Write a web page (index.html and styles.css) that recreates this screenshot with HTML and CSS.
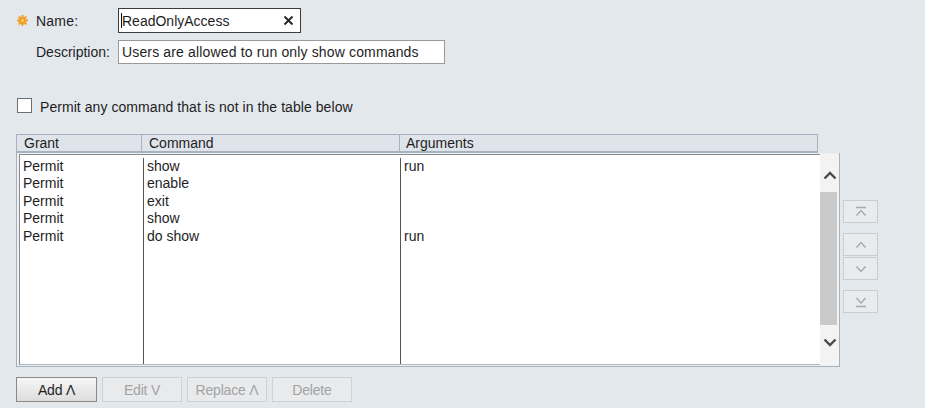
FILE: index.html
```html
<!DOCTYPE html>
<html>
<head>
<meta charset="utf-8">
<link rel="stylesheet" href="styles.css">
</head>
<body>
<div class="page">
  <div class="field-row name-row">
    <span class="req">
      <svg width="11" height="11" viewBox="0 0 11 11"><g fill="#f0a02c"><circle cx="5.5" cy="5.5" r="3.8"/><rect x="4.5" y="0" width="2" height="11" rx="0.6"/><rect x="0" y="4.5" width="11" height="2" rx="0.6"/><rect x="4.5" y="0" width="2" height="11" rx="0.6" transform="rotate(45 5.5 5.5)"/><rect x="4.5" y="0" width="2" height="11" rx="0.6" transform="rotate(-45 5.5 5.5)"/></g><circle cx="5.5" cy="5.5" r="1.3" fill="#fbd48a"/></svg>
    </span>
    <span class="label">Name:</span>
    <div class="input name-input">
      <span class="caret"></span><span class="value">ReadOnlyAccess</span>
      <svg class="clear" width="11" height="11" viewBox="0 0 11 11"><path d="M1.5 1.5L9.5 9.5M9.5 1.5L1.5 9.5" stroke="#222" stroke-width="1.8" fill="none"/></svg>
    </div>
  </div>
  <div class="field-row desc-row">
    <span class="label">Description:</span>
    <div class="input desc-input">Users are allowed to run only show commands</div>
  </div>
  <div class="check-row">
    <span class="checkbox"></span>
    <span class="check-text">Permit any command that is not in the table below</span>
  </div>
  <div class="table-area">
    <div class="table">
      <div class="thead">
        <div class="th th-grant">Grant</div>
        <div class="th th-cmd">Command</div>
        <div class="th th-args">Arguments</div>
      </div>
      <div class="tbody-wrap">
        <div class="tbody">
          <div class="col col-grant">
            <div class="cell">Permit</div>
            <div class="cell">Permit</div>
            <div class="cell">Permit</div>
            <div class="cell">Permit</div>
            <div class="cell">Permit</div>
          </div>
          <div class="col col-cmd">
            <div class="cell">show</div>
            <div class="cell">enable</div>
            <div class="cell">exit</div>
            <div class="cell">show</div>
            <div class="cell">do show</div>
          </div>
          <div class="col col-args">
            <div class="cell">run</div>
            <div class="cell"></div>
            <div class="cell"></div>
            <div class="cell"></div>
            <div class="cell">run</div>
          </div>
        </div>
        <div class="scrollbar">
          <div class="sb-arrow sb-up"><svg width="14" height="9" viewBox="0 0 14 9"><path d="M1.5 7.5L7 2L12.5 7.5" stroke="#4a4a4a" stroke-width="2.4" fill="none"/></svg></div>
          <div class="sb-thumb"></div>
          <div class="sb-arrow sb-down"><svg width="14" height="9" viewBox="0 0 14 9"><path d="M1.5 1.5L7 7L12.5 1.5" stroke="#4a4a4a" stroke-width="2.4" fill="none"/></svg></div>
        </div>
      </div>
    </div>
    <div class="side-buttons">
      <div class="side-btn btn-top"><svg width="14" height="12" viewBox="0 0 14 12"><path d="M2 1.5H12M2.5 9.5L7 4.5L11.5 9.5" stroke="#a9a9a9" stroke-width="1.4" fill="none"/></svg></div>
      <div class="side-pair">
        <div class="side-btn"><svg width="14" height="10" viewBox="0 0 14 10"><path d="M2.5 7.5L7 2.5L11.5 7.5" stroke="#a9a9a9" stroke-width="1.4" fill="none"/></svg></div>
        <div class="side-btn"><svg width="14" height="10" viewBox="0 0 14 10"><path d="M2.5 2.5L7 7.5L11.5 2.5" stroke="#a9a9a9" stroke-width="1.4" fill="none"/></svg></div>
      </div>
      <div class="side-btn btn-bottom"><svg width="14" height="12" viewBox="0 0 14 12"><path d="M2.5 2L7 7L11.5 2M2 10.5H12" stroke="#a9a9a9" stroke-width="1.4" fill="none"/></svg></div>
    </div>
  </div>
  <div class="buttons">
    <div class="btn btn-primary">Add Λ</div>
    <div class="btn btn-disabled">Edit V</div>
    <div class="btn btn-disabled">Replace Λ</div>
    <div class="btn btn-disabled">Delete</div>
  </div>
</div>
</body>
</html>
```

FILE: styles.css
```css
html, body {
  margin: 0;
  padding: 0;
}
body {
  background: #e3e8ed;
  font-family: "Liberation Sans", Arial, sans-serif;
  font-size: 14px;
  color: #1e1e1e;
  width: 925px;
  height: 408px;
  overflow: hidden;
}
.page {
  padding: 8px 0 0 16px;
}
.field-row {
  display: flex;
  align-items: center;
}
.name-row {
  height: 25px;
}
.req {
  width: 11px;
  height: 11px;
  margin-left: 1px;
  margin-right: 8px;
  display: flex;
}
.label {
  width: 82px;
  letter-spacing: 0.2px;
}
.desc-row {
  margin-top: 7px;
  height: 24px;
  padding-left: 20px;
}
.desc-row .label {
  width: 82px;
  letter-spacing: 0;
}
.input {
  background: #fff;
  box-sizing: border-box;
  display: flex;
  align-items: center;
}
.name-input {
  width: 183px;
  height: 25px;
  border: 1px solid #3c3c3c;
  padding-left: 2px;
}
.caret {
  width: 1px;
  height: 15px;
  background: #111;
}
.value {
  flex: 1;
}
.clear {
  margin-right: 6px;
}
.desc-input {
  width: 327px;
  height: 24px;
  border: 1px solid #9a9a9a;
  padding-left: 3px;
  letter-spacing: 0.15px;
}
.check-row {
  margin-top: 33px;
  display: flex;
  align-items: center;
  height: 16px;
}
.checkbox {
  width: 13px;
  height: 13px;
  border: 1px solid #6e6e6e;
  background: #fff;
  margin-left: 1px;
  margin-right: 8px;
}
.check-text {
  line-height: 16px;
  padding-top: 3px;
  letter-spacing: 0.06px;
}
.table-area {
  margin-top: 21px;
  display: flex;
  align-items: flex-start;
}
.table {
  width: 824px;
}
.thead {
  display: flex;
  width: 802px;
  height: 19px;
  box-sizing: border-box;
  border: 1px solid #a6b3bf;
  border-bottom: 2px solid #a6b3bf;
  background: #dee4ea;
}
.th {
  box-sizing: border-box;
  padding-left: 7px;
  line-height: 17px;
  border-right: 1px solid #a6b3bf;
}
.th-grant {
  width: 125px;
}
.th-cmd {
  width: 258px;
}
.th-args {
  flex: 1;
  border-right: none;
  padding-left: 6px;
}
.tbody-wrap {
  display: flex;
  height: 214px;
  box-sizing: border-box;
  border: 1px solid #a6b3bf;
  border-top: none;
  background: #edf0f2;
  padding: 1px 0 1px 2px;
}
.tbody {
  display: flex;
  flex: 1;
  background: #fff;
  border-left: 1px solid #8a8a8a;
  border-top: 1px solid #8a8a8a;
  border-bottom: 1px solid #b0b8c0;
  padding-top: 3px;
}
.col {
  box-sizing: border-box;
  padding-left: 3px;
}
.col-grant {
  width: 124px;
  border-right: 1px solid #555;
}
.col-cmd {
  width: 257px;
  border-right: 1px solid #555;
  padding-left: 3px;
}
.col-args {
  flex: 1;
  padding-left: 3px;
}
.cell {
  height: 17.4px;
  line-height: 17.4px;
  white-space: nowrap;
}
.scrollbar {
  width: 19px;
  display: flex;
  flex-direction: column;
  background: #f3f3f3;
}
.sb-arrow {
  display: flex;
  align-items: center;
  justify-content: center;
}
.sb-up {
  height: 38px;
  padding-top: 5px;
  box-sizing: border-box;
}
.sb-thumb {
  height: 133px;
  background: #c9c9c9;
  margin-right: 2px;
}
.sb-down {
  flex: 1;
  padding-bottom: 6px;
  box-sizing: border-box;
}
.side-buttons {
  margin-left: 3px;
  margin-top: 66px;
  display: flex;
  flex-direction: column;
  gap: 10px;
}
.side-pair {
  display: flex;
  flex-direction: column;
  gap: 1px;
}
.side-btn {
  width: 35px;
  height: 23px;
  box-sizing: border-box;
  border: 1px solid #c9cdd1;
  background: #e9ebed;
  display: flex;
  align-items: center;
  justify-content: center;
}
.buttons {
  margin-top: 10px;
  display: flex;
  gap: 5px;
}
.btn {
  width: 81px;
  height: 25px;
  box-sizing: border-box;
  display: flex;
  align-items: center;
  justify-content: center;
  font-size: 14px;
  letter-spacing: -0.2px;
}
.btn-primary {
  border: 1px solid #8a8a8a;
  background: linear-gradient(#f6f6f6, #dddddd);
  color: #1e1e1e;
}
.btn-disabled {
  border: 1px solid #cdd2d6;
  background: #e8eaec;
  color: #a3a3a3;
  width: 80px;
}
```
